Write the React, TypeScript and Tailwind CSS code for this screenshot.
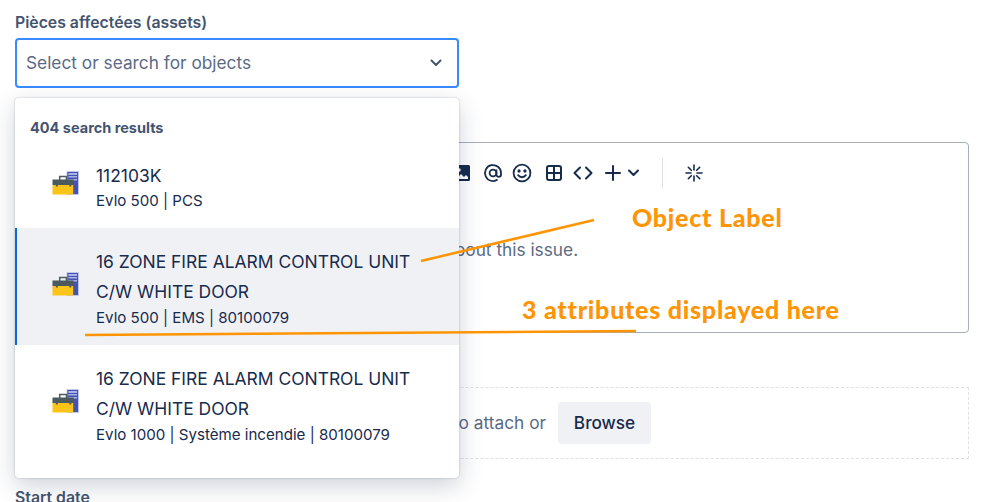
import React from "react";

const inter = "font-['Inter',sans-serif]";

function AssetIcon() {
  return (
    <svg width="27" height="24" viewBox="0 0 28 24" preserveAspectRatio="none" className="shrink-0 -mt-[6px]">
      <rect x="15.5" y="0.5" width="12" height="23" fill="#4453b0" stroke="#c9cff0" strokeWidth="0.8" />
      <rect x="17" y="2" width="9" height="2" fill="#a9b2e4" />
      <rect x="17" y="5" width="9" height="1.5" fill="#a9b2e4" />
      <rect x="17" y="8" width="9" height="1.5" fill="#a9b2e4" />
      <path d="M8 9V5.500h7V9" fill="none" stroke="#4f5d63" strokeWidth="1.6" />
      <rect x="0.5" y="8.500" width="22" height="5.500" fill="#4c5a60" />
      <rect x="0.5" y="14" width="21.500" height="9.500" fill="#fcc419" />
      <rect x="4" y="13" width="2" height="2.5" fill="#4c5a60" />
      <rect x="18" y="13" width="2" height="2.5" fill="#4c5a60" />
    </svg>
  );
}

function Row({ title, sub, active }: { title: string[]; sub: string; active?: boolean }) {
  return (
    <div
      className={`flex items-center pl-[35px] pr-4 border-l-2 ${
        active ? "bg-[#f0f1f4] border-[#0c66e4]" : "bg-white border-transparent"
      } ${title.length > 1 ? "h-[117px] pt-[1px]" : "h-[78px] pb-[6px]"}`}
    >
      <AssetIcon />
      <div className="ml-[17px] text-[#172b4d]">
        {title.map((t) => (
          <div key={t} className="text-[17.45px] leading-[30.5px] whitespace-nowrap">{t}</div>
        ))}
        <div className="text-[15.1px] leading-[20px] whitespace-nowrap">{sub}</div>
      </div>
    </div>
  );
}

function Toolbar() {
  const c = "#172b4d";
  return (
    <div className="flex items-center h-[32px] pl-[437px]">
      <svg width="18" height="18" viewBox="0 0 18 18" className="mr-[12px]">
        <path d="M1 2.5A1.5 1.5 0 0 1 2.500 1h13A1.500 1.500 0 0 1 17 2.500v13a1.500 1.500 0 0 1-1.500 1.500h-13A1.500 1.500 0 0 1 1 15.500z" fill={c} />
        <circle cx="6" cy="6" r="1.800" fill="#fff" />
        <path d="M3 15l5-5 3 3 2-2 2 2v2z" fill="#fff" />
      </svg>
      <svg width="20" height="20" viewBox="0 0 20 20" fill="none" stroke={c} strokeWidth="1.800" className="mr-[9px]">
        <circle cx="10" cy="10" r="3.400" />
        <path d="M13.400 6.500v5a2.300 2.300 0 0 0 4.600 0V10a8 8 0 1 0-3.400 6.600" />
      </svg>
      <svg width="20" height="20" viewBox="0 0 19 19" fill="none" stroke={c} strokeWidth="1.700" className="mr-[14px]">
        <circle cx="9.500" cy="9.500" r="8" />
        <circle cx="6.700" cy="7.600" r="0.700" fill={c} />
        <circle cx="12.300" cy="7.600" r="0.700" fill={c} />
        <path d="M5.800 11.500c2 2.700 5.400 2.700 7.400 0" strokeLinecap="round" />
      </svg>
      <svg width="16" height="16" viewBox="0 0 16 16" fill="none" stroke={c} strokeWidth="2" className="mr-[11px]">
        <rect x="1" y="1" width="14" height="14" rx="2" />
        <path d="M8 1v14M1 8h14" />
      </svg>
      <svg width="20" height="16" viewBox="0 0 20 16" fill="none" stroke={c} strokeWidth="2" strokeLinecap="round" strokeLinejoin="round" className="mr-[12px]">
        <path d="M7 2.500L1.500 8 7 13.500M13 2.500L18.500 8 13 13.500" />
      </svg>
      <svg width="16" height="16" viewBox="0 0 16 16" fill="none" stroke={c} strokeWidth="2" strokeLinecap="round" className="mr-[7px]">
        <path d="M8 1v14M1 8h14" />
      </svg>
      <svg width="11" height="8" viewBox="0 0 11 8" fill="none" stroke={c} strokeWidth="2" strokeLinecap="round" strokeLinejoin="round">
        <path d="M1 1.500l4.500 4.500L10 1.500" />
      </svg>
      <div className="w-px h-[30px] bg-[#dfe1e6] ml-[23px] mr-[22px]" />
      <svg width="18" height="18" viewBox="0 0 18 18" fill="none" stroke={c} strokeWidth="1.600" strokeLinecap="round">
        <path d="M9 1v5M9 12v5M1 9h5M12 9h5M3.300 3.300l3 3M11.700 11.700l3 3M14.700 3.300l-3 3M6.300 11.700l-3 3" />
      </svg>
    </div>
  );
}

export default function App() {
  return (
    <div className={`relative w-[999px] h-[502px] overflow-hidden bg-white ${inter}`}>
      <div className="px-[15px] pt-[13px]">
        <div className="text-[15.8px] leading-[20px] font-semibold text-[#44546f]">Pièces affectées (assets)</div>
        <div className="mt-[5px] w-[444px] h-[50px] rounded-[4px] border-2 border-[#388bff] flex items-center justify-between pl-[9px] pr-[15px]">
          <span className="text-[17.3px] text-[#5a6a85]">Select or search for objects</span>
          <svg width="12" height="8" viewBox="0 0 12 8" fill="none" stroke="#44546f" strokeWidth="2" strokeLinecap="round" strokeLinejoin="round">
            <path d="M1.500 1.500L6 6l4.500-4.500" />
          </svg>
        </div>
        <div className="mt-[54px] w-[954px] h-[191px] rounded-[4px] border border-[#a5aebd] pt-[14px]">
          <Toolbar />
          <div className="mt-[49px] pl-[429px] text-[17.3px] leading-[24px] text-[#5a6a85] h-[24px]">about this issue.</div>
        </div>
        <div className="mt-[54px] w-[954px] h-[72px] border border-dashed border-[#dfe1e6] flex items-center pl-[431px]">
          <span className="text-[17.3px] text-[#5a6a85] mr-[12px] w-[99px] text-right whitespace-nowrap">to attach or</span>
          <div className="w-[93px] h-[42px] rounded-[4px] bg-[#f0f1f4] flex items-center justify-center text-[17.2px] font-medium text-[#172b4d]">Browse</div>
        </div>
        <div className="mt-[29px] text-[15.8px] leading-[20px] font-semibold text-[#44546f]">Start date</div>
      </div>

      <div className="absolute left-[15px] top-[98px] w-[444px] h-[380px] rounded-[4px] bg-white shadow-[0_8px_24px_rgba(9,30,66,0.2),0_0_2px_rgba(9,30,66,0.3)] overflow-hidden">
        <div className="pl-[15px] pt-[21px] h-[52px] text-[14.5px] leading-[18px] font-bold text-[#44546f]">404 search results</div>
        <Row title={["112103K"]} sub="Evlo 500 | PCS" />
        <Row active title={["16 ZONE FIRE ALARM CONTROL UNIT", "C/W WHITE DOOR"]} sub="Evlo 500 | EMS | 80100079" />
        <Row title={["16 ZONE FIRE ALARM CONTROL UNIT", "C/W WHITE DOOR"]} sub="Evlo 1000 | Système incendie | 80100079" />
      </div>

      <svg className="absolute left-0 top-0 pointer-events-none" width="999" height="502" fill="none" stroke="#ff9505" strokeWidth="2.500">
        <path d="M421 261L594 220" />
        <path d="M85 335L636 331" />
      </svg>
      <div className="absolute left-[632px] top-[201px] font-['Lato',sans-serif] font-black text-[25px] leading-[32px] tracking-[0.75px] text-[#ff9505]">Object Label</div>
      <div className="absolute left-[522px] top-[293px] font-['Lato',sans-serif] font-black text-[25px] leading-[32px] tracking-[0.75px] text-[#ff9505]">3 attributes displayed here</div>
    </div>
  );
}
